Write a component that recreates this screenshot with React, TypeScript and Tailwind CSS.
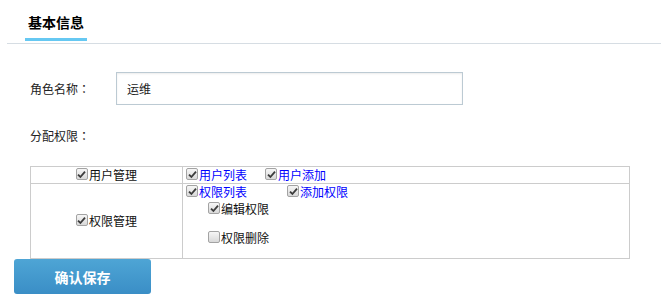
import React from "react";

const font = { fontFamily: '"Noto Sans CJK SC", "Liberation Sans", sans-serif' };

const Check = ({ checked = true }: { checked?: boolean }) => (
  <span className="mt-[1px] mr-[1px] inline-flex h-[12px] w-[12px] shrink-0 items-center justify-center rounded-[2px] border border-[#a3a3a3] bg-gradient-to-b from-[#f6f6f6] to-[#d9d9d9]">
    {checked && (
      <svg width="9" height="9" viewBox="0 0 9 9">
        <path d="M1 4.6 L3.4 7 L8 1.6" fill="none" stroke="#3c3c3c" strokeWidth="1.8" />
      </svg>
    )}
  </span>
);

const Item = ({
  label,
  link = false,
  checked = true,
  className = "",
}: {
  label: string;
  link?: boolean;
  checked?: boolean;
  className?: string;
}) => (
  <span className={`inline-flex items-start leading-[16px] ${className}`}>
    <Check checked={checked} />
    <span className={link ? "text-[#0000ff]" : "text-[#111]"}>{label}</span>
  </span>
);

// full-width colon centred in its cell, as in the original
const Colon = () => <span className="font-['Noto_Sans_CJK_TC',sans-serif]">：</span>;

const App = () => {
  return (
    <div className="h-[295px] w-[661px] overflow-hidden bg-white text-[12px] leading-[16px] text-[#222]" style={font}>
      <div className="ml-[7px] border-b border-[#d6dde3] pl-[18px] pt-[12px]">
        <div className="mb-[2px] inline-block border-b-[3px] border-[#66c8f2] px-[3px] pb-[6px] text-[14px] font-bold leading-[20px] text-black">
          基本信息
        </div>
      </div>

      <div className="pl-[30px]">
        <div className="mt-[28px] flex items-center">
          <span className="w-[86px]">
            角色名称<Colon />
          </span>
          <div className="flex h-[33px] w-[347px] items-center border border-[#bccad3] pl-[10px] shadow-[inset_0_1px_2px_rgba(0,0,0,0.08)]">
            运维
          </div>
        </div>

        <div className="mt-[21px] leading-[20px]">
          分配权限<Colon />
        </div>

        <div className="mt-[20px] w-[600px] border border-[#cccccc]">
          <div className="flex h-[17px] border-b border-[#cccccc]">
            <div className="flex w-[152px] justify-center border-r border-[#cccccc]">
              <Item label="用户管理" />
            </div>
            <div className="flex pl-[3px]">
              <Item label="用户列表" link />
              <Item label="用户添加" link className="ml-[18px]" />
            </div>
          </div>
          <div className="flex h-[74px]">
            <div className="flex w-[152px] items-center justify-center border-r border-[#cccccc]">
              <Item label="权限管理" />
            </div>
            <div className="flex flex-col items-start pl-[3px]">
              <div className="flex">
                <Item label="权限列表" link />
                <Item label="添加权限" link className="ml-[40px]" />
              </div>
              <Item label="编辑权限" className="ml-[22px] mt-[1px]" />
              <Item label="权限删除" checked={false} className="ml-[22px] mt-[13px]" />
            </div>
          </div>
        </div>
      </div>

      <div className="pl-[14px]">
        <button className="flex h-[35px] w-[137px] items-center justify-center rounded-[3px] bg-gradient-to-b from-[#4ea5d5] to-[#3a8ec6] text-[14px] font-bold text-white">
          确认保存
        </button>
      </div>
    </div>
  );
};

export default App;
